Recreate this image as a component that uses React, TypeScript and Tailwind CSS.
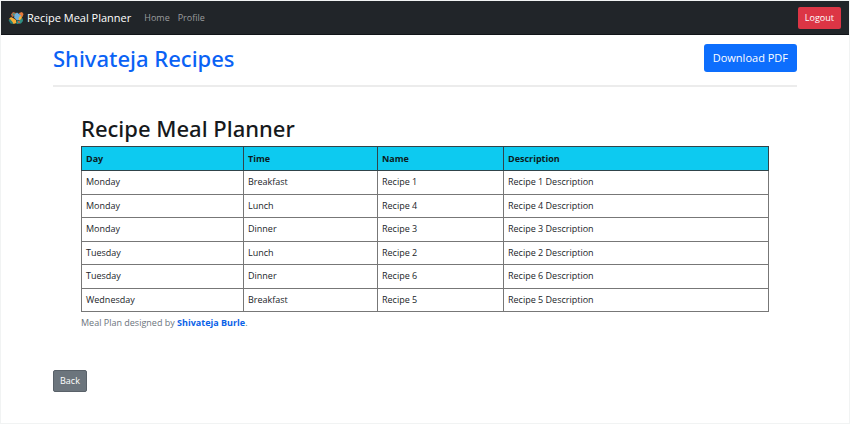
const meals = [
  ["Monday", "Breakfast", "Recipe 1"],
  ["Monday", "Lunch", "Recipe 4"],
  ["Monday", "Dinner", "Recipe 3"],
  ["Tuesday", "Lunch", "Recipe 2"],
  ["Tuesday", "Dinner", "Recipe 6"],
  ["Wednesday", "Breakfast", "Recipe 5"],
];

function Logo() {
  return (
    <svg viewBox="0 0 16 16" className="size-4" aria-hidden="true">
      <path d="M3 4.5 5 2l3 1-1 3-3 1z" fill="#c9683f" />
      <path d="M4.5 3.5 6 3l1 2-2 1z" fill="#3f9a8c" />
      <path d="M11 3l3-1 1.5 2-1 3-2.5-1z" fill="#e57a3c" />
      <path d="M7 4l2-1.500 4 3-1 4-3 1-3-3z" fill="#6fb2dc" />
      <path d="M12 6l2 .5-.5 3-2.500 1-.5-2z" fill="#f7b23b" />
      <path d="M1 9l2-2 2 1 3 2 .5 3-3 1-2-2z" fill="#f9ae35" />
      <path d="M.5 10 2 9l2.500 3 1 2-3-.5z" fill="#277f78" />
      <path d="M9 11l3-1 2.500-2 .5 3-2 2.500-4 .5-1-1z" fill="#2f8f83" />
      <circle cx="11" cy="12" r="1" fill="#db5b3e" />
    </svg>
  );
}

export default function App() {
  return (
    <div className="min-h-screen border border-[#f1f3f3] bg-white font-['Open_Sans','Noto_Sans',sans-serif] text-[9px] leading-[14px] text-[#212529]">
      <nav className="flex h-[34px] items-center border-b border-[#111418] bg-[#212529] pr-2 pl-[7px]">
        <a href="#" className="flex items-center gap-[3px] text-[11px] text-white">
          <Logo />
          Recipe Meal Planner
        </a>
        <div className="ml-[13px] flex gap-2 text-[#9b9d9f]">
          <a href="#">Home</a>
          <a href="#">Profile</a>
        </div>
        <button type="button" className="ml-auto h-[22px] rounded-[2px] bg-[#dc3545] px-[7px] text-white">
          Logout
        </button>
      </nav>

      <main className="px-[52px]">
        <header className="flex items-start justify-between border-b-2 border-[#ececec] pt-[9px] pb-[13px]">
          <h1 className="font-['Noto_Sans','Open_Sans',sans-serif] text-[22px] leading-7 font-medium text-[#0a62f5]">Shivateja Recipes</h1>
          <button type="button" className="h-7 rounded-[3px] bg-[#0d6efd] px-[9px] text-[11px] text-white">
            Download PDF
          </button>
        </header>

        <section className="px-7 pt-[27px]">
          <h2 className="mb-1 font-['Noto_Sans','Open_Sans',sans-serif] text-[22px] leading-7 font-medium text-[#16191c]">Recipe Meal Planner</h2>
          <table className="h-[166px] w-full table-fixed border-collapse text-left">
            <thead>
              <tr className="h-6 bg-[#0dcaf0] text-[#0b1c22]">
                <th scope="col" className="w-[162px] border border-[#30444a] px-1">Day</th>
                <th scope="col" className="w-[134px] border border-[#30444a] px-1">Time</th>
                <th scope="col" className="w-[126px] border border-[#30444a] px-1">Name</th>
                <th scope="col" className="border border-[#30444a] px-1">Description</th>
              </tr>
            </thead>
            <tbody>
              {meals.map(([day, time, name]) => (
                <tr key={name}>
                  <td className="border border-[#777777] px-1">{day}</td>
                  <td className="border border-[#777777] px-1">{time}</td>
                  <td className="border border-[#777777] px-1">{name}</td>
                  <td className="border border-[#777777] px-1">{name} Description</td>
                </tr>
              ))}
            </tbody>
          </table>
          <p className="mt-1 text-[#6c757d]">
            Meal Plan designed by <a href="#" className="font-bold text-[#0a62e8]">Shivateja Burle</a>.
          </p>
        </section>

        <button type="button" className="mt-10 h-[22px] rounded-[2px] border border-[#596169] bg-[#6c757d] px-[6px] text-white">
          Back
        </button>
      </main>
    </div>
  );
}
